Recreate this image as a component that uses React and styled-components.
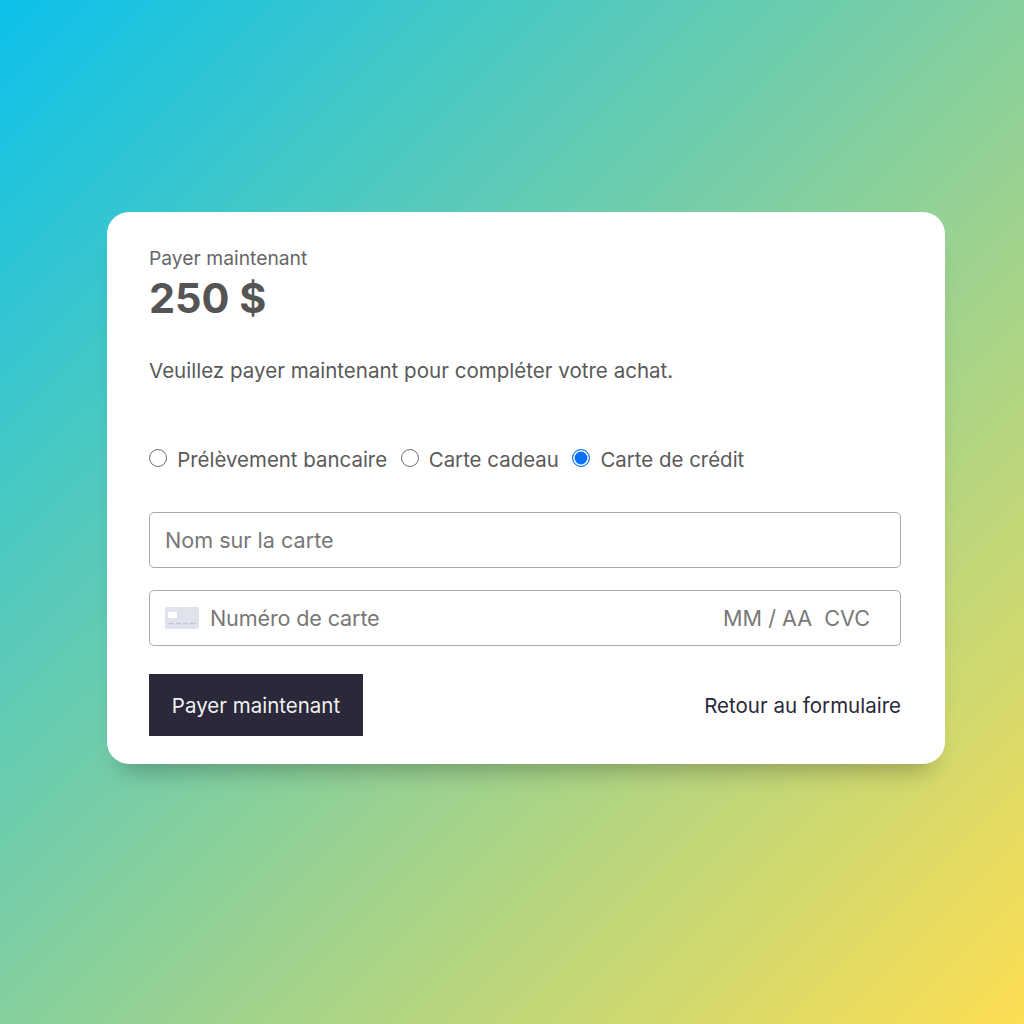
import React from 'react';
import styled, { createGlobalStyle } from 'styled-components';

const GlobalStyle = createGlobalStyle`
  html, body { margin: 0; padding: 0; }
  body { font-family: Inter, "Liberation Sans", sans-serif; }
`;

const Page = styled.main`
  width: 1024px;
  height: 1024px;
  display: flex;
  padding: 212px 79px 0 107px;
  box-sizing: border-box;
  background: linear-gradient(135deg, #0cc1ea 0%, #fede52 100%);
`;

const Card = styled.section`
  width: 838px;
  height: 552px;
  box-sizing: border-box;
  padding: 34px 44px 28px 42px;
  display: flex;
  flex-direction: column;
  background: #fff;
  border-radius: 22px;
  box-shadow: 0 20px 24px -14px rgba(0, 0, 0, 0.28);
`;

const Eyebrow = styled.div`
  font-size: 19.3px;
  line-height: 24px;
  color: #666;
`;

const Amount = styled.div`
  margin-top: 3px;
  font-size: 41.4px;
  line-height: 50px;
  font-weight: 700;
  color: #555;
`;

const Description = styled.p`
  margin: 33px 0 0;
  font-size: 20.55px;
  line-height: 30px;
  color: #5a5a5a;
`;

const RadioRow = styled.div`
  display: flex;
  align-items: center;
  gap: 13.4px;
  margin-top: 59px;
`;

const RadioLabel = styled.label`
  display: flex;
  align-items: center;
  gap: 10.2px;
  font-size: 20.45px;
  line-height: 30px;
  color: #5a5a5a;
`;

const Radio = styled.input.attrs({ type: 'radio', name: 'method' })`
  appearance: none;
  width: 18px;
  height: 18px;
  margin: -4px 0 0;
  box-sizing: border-box;
  border-radius: 50%;
  background: #fff;
  border: 1.3px solid #6f6f6f;

  &:checked {
    border: 1.6px solid #0b6ff7;
    background: #0b6ff7;
    box-shadow: inset 0 0 0 1.6px #fff;
  }
`;

const Field = styled.div`
  height: 56px;
  box-sizing: border-box;
  margin-top: ${props => props.$top}px;
  padding: 0 30px 0 15px;
  display: flex;
  align-items: center;
  border: 1.3px solid #ababab;
  border-radius: 5px;
  font-size: 21.6px;
  color: #787878;
`;

const CardIcon = styled.svg`
  width: 34px;
  height: 22px;
  margin-right: 11px;
  flex: none;
`;

const Grow = styled.span`
  flex: 1;
  letter-spacing: -0.15px;
`;

const Extra = styled.span`
  white-space: pre;
`;

const Actions = styled.div`
  display: flex;
  align-items: center;
  justify-content: space-between;
  margin-top: 28px;
`;

const PayButton = styled.button`
  width: 214px;
  height: 62px;
  border: 0;
  padding: 0;
  background: #2a2839;
  color: #f0f0f0;
  font: 400 20.5px Inter, "Liberation Sans", sans-serif;
`;

const BackLink = styled.a`
  font-size: 20.5px;
  color: #2a2839;
`;

const App = () => (
  <Page>
    <GlobalStyle />
    <Card>
      <Eyebrow>Payer maintenant</Eyebrow>
      <Amount>250 $</Amount>
      <Description>Veuillez payer maintenant pour compléter votre achat.</Description>
      <RadioRow>
        <RadioLabel><Radio />Prélèvement bancaire</RadioLabel>
        <RadioLabel><Radio />Carte cadeau</RadioLabel>
        <RadioLabel><Radio defaultChecked />Carte de crédit</RadioLabel>
      </RadioRow>
      <Field $top={37}>Nom sur la carte</Field>
      <Field $top={22}>
        <CardIcon viewBox="0 0 34 22">
          <rect width="34" height="22" rx="2" fill="#e0e3ec" />
          <rect x="3" y="5" width="9" height="6" fill="#fff" />
          <path d="M3 16.5h6M11 16.5h5M18 16.5h5M25 16.5h6" stroke="#c3c9d9" strokeWidth="1.5" />
        </CardIcon>
        <Grow>Numéro de carte</Grow>
        <Extra>MM / AA  CVC</Extra>
      </Field>
      <Actions>
        <PayButton>Payer maintenant</PayButton>
        <BackLink>Retour au formulaire</BackLink>
      </Actions>
    </Card>
  </Page>
);

export default App;
